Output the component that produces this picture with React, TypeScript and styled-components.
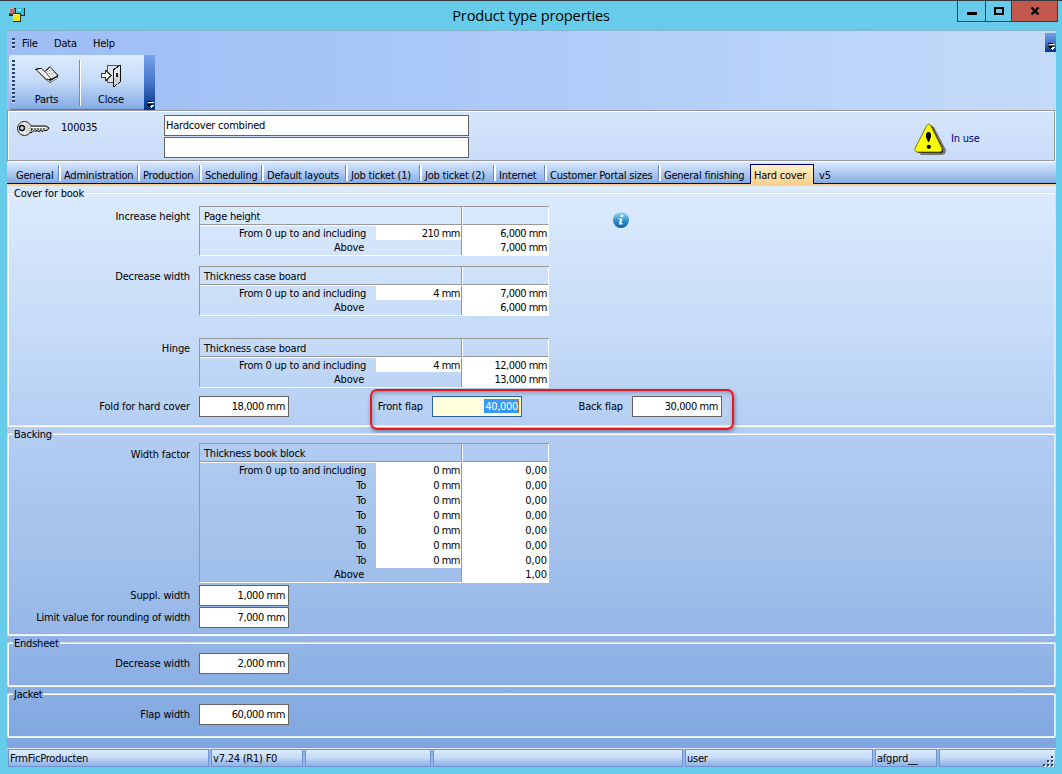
import React from 'react';
import styled, { createGlobalStyle } from 'styled-components';

const GlobalStyle = createGlobalStyle`
  * {
    box-sizing: border-box;
  }

  body {
    margin: 0;
    overflow: hidden;
    color: #000;
    font-family: 'DejaVu Sans Condensed', 'DejaVu Sans', sans-serif;
    font-stretch: condensed;
    font-size: 11px;
    line-height: 14px;
    letter-spacing: -0.22px;
    white-space: nowrap;
  }
`;

const Window = styled.div`
  width: 1062px;
  height: 774px;
  padding: 0 6px 6px 7px;
  display: flex;
  flex-direction: column;
  background: #67cbea;
  border-top: 1px solid #33393d;
`;

const TitleBar = styled.header`
  height: 29px;
  display: flex;
  justify-content: space-between;
  align-items: flex-start;
  margin: 0 -2px 0 1px;
`;

const TitleIcon = styled.svg`
  width: 97px;
  height: 18px;
  margin-top: 5px;
`;

const Title = styled.h1`
  margin: 4px 0 0;
  font-family: 'Open Sans', 'Noto Sans', sans-serif;
  font-stretch: normal;
  font-size: 14.6px;
  font-weight: 400;
  line-height: 20px;
  letter-spacing: -0.18px;
`;

const WindowButtons = styled.div`
  display: flex;
  height: 21px;
  border: 1px solid #27414b;
  border-top: none;
`;

const WindowButton = styled.button<{ $width: number; $close?: boolean }>`
  width: ${(p) => p.$width}px;
  height: 20px;
  padding: 0;
  border: none;
  border-right: ${(p) => (p.$close ? 'none' : '1px solid #27414b')};
  background: ${(p) => (p.$close ? '#c2584e' : 'transparent')};

  svg {
    display: block;
    margin: 0 auto;
  }
`;

const Client = styled.main`
  flex: 1;
  display: flex;
  flex-direction: column;
  border-top: 1px solid #80b7cc;
  background: #9ebef5;
`;

const CommandArea = styled.div`
  height: 79px;
  display: flex;
  justify-content: space-between;
  background: linear-gradient(90deg, #9ebdf5 0%, #a9c7f7 40%, #bcd5fa 80%, #c4daf8 100%);
`;

const MenuBar = styled.nav`
  height: 24px;
  display: flex;
  align-items: center;
  padding: 1px 0 0 5px;
`;

const MenuItem = styled.span<{ $width: number; $indent?: number }>`
  width: ${(p) => p.$width}px;
  padding: 1px 0 0 ${(p) => p.$indent || 0}px;
`;

const Grip = styled.i<{ $height: number }>`
  width: 3px;
  height: ${(p) => p.$height}px;
  background: repeating-linear-gradient(180deg, #27417c 0 2px, #d8e6fb 2px 3px, transparent 3px 4px);
`;

const ToolBar = styled.div`
  width: 146px;
  height: 55px;
  margin-left: 2px;
  display: flex;
  border-radius: 3px 0 0 3px;
  background: linear-gradient(180deg, #dcebfd 0%, #c7dcf8 45%, #85ade7 97%, #3c65ae 100%);
  padding: 5px 0 0 3px;
`;

const ToolButton = styled.div<{ $width: number; $divider?: boolean }>`
  width: ${(p) => p.$width}px;
  height: 46px;
  display: flex;
  flex-direction: column;
  align-items: center;
  padding: 4px 1px 0 0;
  border-right: ${(p) => (p.$divider ? '1px solid #6a8ccb' : 'none')};
  box-shadow: ${(p) => (p.$divider ? '1px 0 0 #fff' : 'none')};

  svg {
    flex: none;
    margin-bottom: 5px;
  }
`;

const Overflow = styled.div<{ $height: number }>`
  width: 11px;
  height: ${(p) => p.$height}px;
  margin-top: ${(p) => (p.$height > 30 ? -5 : 2)}px;
  margin-left: auto;
  display: flex;
  align-items: flex-end;
  padding: 0 0 2px 3px;
  background: linear-gradient(180deg, #76a2ec 0%, #4476c8 50%, #003489 100%);
`;

const RecordHeader = styled.section`
  height: 51px;
  width: 1048px;
  display: flex;
  align-items: flex-start;
  border: 1px solid #989898;
  box-shadow: inset 1px 1px 0 #fff, 1px 1px 0 #fff;
  background: linear-gradient(180deg, #d5e5fb, #c9dcf8);
  padding-left: 9px;

  > svg {
    margin-top: 9px;
  }
`;

const RecordId = styled.span`
  width: 103px;
  margin: 10px 0 0 11px;
`;

const RecordFields = styled.div`
  display: flex;
  flex-direction: column;
  gap: 1px;
  margin-top: 4px;
  width: 750px;
`;

const NameField = styled.div`
  width: 305px;
  height: 21px;
  padding: 3px 1px;
  border: 1px solid #646464;
  background: #fff;
`;

const InUse = styled.div`
  display: flex;
  margin-top: 12px;
  color: #00007f;

  span {
    margin: 9px 0 0 4px;
  }
`;

const TabStrip = styled.nav`
  height: 24px;
  padding-top: 2px;
  margin-top: 1px;
  display: flex;
  border-bottom: 2px solid #fdcf8c;
  background: linear-gradient(180deg, #dbe9fd 0%, #a9c6f1 55%, #82a9e2 100%);
`;

const Tab = styled.div<{ $width?: number; $active?: boolean; $last?: boolean; $first?: boolean }>`
  position: relative;
  width: ${(p) => p.$width}px;
  flex: ${(p) => (p.$width ? 'none' : 1)};
  height: 20px;
  padding: 5px 0 0 ${(p) => (p.$first ? 9 : p.$width ? 3 : 5)}px;
  border-bottom: 1px solid #000078;

  &::after {
    content: '';
    display: ${(p) => (p.$last || p.$active ? 'none' : 'block')};
    position: absolute;
    top: 1px;
    right: 0;
    width: 2px;
    height: 16px;
    border-left: 1px solid #6688c8;
    background: #fff;
  }

  ${(p) =>
    p.$active &&
    `
    border: 1px solid #000078;
    border-bottom: none;
    background: linear-gradient(180deg, #fff1cc, #fdcf8c);
    padding-top: 4px;
  `}
`;

const Page = styled.section`
  flex: 1;
  padding-top: 6px;
  display: flex;
  flex-direction: column;
  gap: 6px;
  background: linear-gradient(180deg, #ddecfe 0%, #d0e2fa 14%, #c4daf7 28%, #b3cdf2 44%, #9fbeea 70%, #7fa6e0 100%);
`;

const Group = styled.fieldset<{ $height: number }>`
  position: relative;
  height: ${(p) => p.$height}px;
  margin: 0;
  padding: 0;
  border: 1px solid #d5e1ed;
  border-bottom-color: #fff;
  box-shadow: inset 1px 1px 0 #fff, inset -1px -1px 0 #e4edf6;
  border-radius: 2px;
  min-width: 0;
`;

const GroupBody = styled.div<{ $top: number }>`
  padding-top: ${(p) => p.$top}px;
`;

const GroupTitle = styled.span<{ $color: string }>`
  position: absolute;
  top: -6px;
  left: 5px;
  height: 14px;
  padding: 0 1px;
  background: ${(p) => p.$color};
`;

const Row = styled.div<{ $after?: number }>`
  display: flex;
  align-items: flex-start;
  margin-bottom: ${(p) => p.$after || 0}px;
`;

const Label = styled.label<{ $width?: number; $tall?: boolean; $tight?: boolean }>`
  width: ${(p) => p.$width || 182}px;
  margin-right: 9px;
  padding-top: ${(p) => (p.$tall ? 5 : 4)}px;
  text-align: right;
  letter-spacing: ${(p) => (p.$tight ? -0.24 : -0.14)}px;
`;

const Amount = styled.div<{ $focused?: boolean }>`
  width: 90px;
  height: 21px;
  padding: 3px 3px 0 0;
  border: 1px solid ${(p) => (p.$focused ? '#2b6299' : '#646464')};
  background: ${(p) => (p.$focused ? '#ffffdb' : '#fff')};
  text-align: right;
  letter-spacing: ${(p) => (p.$focused ? -0.3 : -0.42)}px;

  mark {
    display: block;
    width: 35px;
    height: 14px;
    margin: -1px -1px 0 auto;
    padding-top: 1px;
    line-height: 13px;
    background: #3399ff;
    color: #fff;
    border-right: 1px solid #cc6600;
  }
`;

const Table = styled.div`
  width: 350px;
  border-left: 1px solid #989898;
  border-top: 1px solid #989898;
  border-bottom: 1px solid #fff;
  display: grid;
  grid-template-columns: 262px 87px;
`;

const HeadCell = styled.div<{ $value?: boolean }>`
  height: 18px;
  margin-bottom: 1px;
  padding: 3px 0 0 4px;
  border-bottom: 1px solid #989898;
  border-right: 1px solid ${(p) => (p.$value ? '#fff' : '#989898')};
  border-left: ${(p) => (p.$value ? '1px solid #fff' : 'none')};
  box-shadow: 0 1px 0 #fff;
`;

const RangeCell = styled.div<{ $height: number }>`
  display: grid;
  grid-template-columns: 176px 85px;
  height: ${(p) => p.$height}px;
  border-right: 1px solid #989898;
  text-align: right;
`;

const RangeLabel = styled.span<{ $above?: boolean; $top: number }>`
  padding: ${(p) => p.$top}px ${(p) => (p.$above ? 12 : 10)}px 0 0;
`;

const TableValue = styled.span<{ $blank?: boolean; $height: number; $top: number; $end: number; $spacing: number }>`
  height: ${(p) => p.$height}px;
  padding: ${(p) => p.$top}px ${(p) => p.$end}px 0 0;
  background: ${(p) => (p.$blank ? 'transparent' : '#fff')};
  text-align: right;
  letter-spacing: ${(p) => p.$spacing}px;
`;

const InfoHolder = styled.div`
  margin: 6px 0 0 64px;
  height: 16px;
`;

const Highlight = styled.div`
  position: absolute;
  left: 362px;
  top: 196px;
  width: 364px;
  height: 41px;
  border: 2px solid #ee1518;
  border-radius: 7px;
  box-shadow: 1px 2px 4px rgba(40, 50, 80, 0.5), inset 1px 2px 4px rgba(40, 50, 80, 0.35);
`;

const StatusBar = styled.footer`
  height: 20px;
  display: flex;
  gap: 2px;
  padding: 0 1px 1px;
  border-top: 1px solid #dfe9f8;
  background: #94b5e8;
`;

const StatusCell = styled.div<{ $width: number }>`
  width: ${(p) => p.$width}px;
  height: 18px;
  padding: 2px 1px 0;
  border: 1px solid #6e93ce;
  background: linear-gradient(180deg, #dceafc 0%, #c6dbf7 50%, #a3c1ed 75%, #8fb2e6 100%);
`;

const ResizeCell = styled(StatusCell)`
  display: flex;
  justify-content: flex-end;
  border-right: none;
  padding-top: 5px;
`;

type TableRow = { label: string; limit?: string; value: string };

const tabs: { label: string; width?: number }[] = [
  { label: 'General', width: 54 },
  { label: 'Administration', width: 79 },
  { label: 'Production', width: 62 },
  { label: 'Scheduling', width: 62 },
  { label: 'Default layouts', width: 84 },
  { label: 'Job ticket (1)', width: 74 },
  { label: 'Job ticket (2)', width: 74 },
  { label: 'Internet', width: 51 },
  { label: 'Customer Portal sizes', width: 114 },
  { label: 'General finishing', width: 89 },
  { label: 'Hard cover', width: 64 },
  { label: 'v5' },
];

const backingRows: TableRow[] = [
  { label: 'From 0 up to and including', limit: '0 mm', value: '0,00' },
  ...Array.from({ length: 6 }, () => ({ label: 'To', limit: '0 mm', value: '0,00' })),
  { label: 'Above', value: '1,00' },
];

const caseRows = (limit: string, first: string, above: string): TableRow[] => [
  { label: 'From 0 up to and including', limit, value: first },
  { label: 'Above', value: above },
];

function RangeTable({ title, rows }: { title: string; rows: TableRow[] }) {
  const short = rows.length === 2;

  return (
    <Table>
      <HeadCell>{title}</HeadCell>
      <HeadCell $value />
      {rows.map((row, i) => {
        const above = !row.limit;
        const top = above && !short ? 0 : 1;
        // short tables give the spare pixel to the last row
        const height = above === short ? 15 : 14;
        return (
          <React.Fragment key={i}>
            <RangeCell $height={height}>
              <RangeLabel $above={above} $top={top}>
                {row.label}
              </RangeLabel>
              <TableValue $blank={above} $height={height} $top={top} $end={1} $spacing={-0.5}>
                {row.limit}
              </TableValue>
            </RangeCell>
            <TableValue $height={height} $top={top} $end={2} $spacing={short ? -0.5 : -0.1}>
              {row.value}
            </TableValue>
          </React.Fragment>
        );
      })}
    </Table>
  );
}

function AppIcon() {
  return (
    <TitleIcon viewBox="0 0 97 18" shapeRendering="crispEdges">
      <path d="M1 2h7v8H1z" fill="#33282a" />
      <path d="M2 3h5v5H2z" fill="#b56f70" />
      <path d="M1 2h5v1H2v4H1z" fill="#dba9a6" />
      <path d="M9 2h8v8H9z" fill="#16272e" />
      <path d="M9 2h7v7h-7z" fill="#1fc4f0" />
      <path d="M10 3h3v2h-3z" fill="#a8efff" />
      <path d="M5 7h8v9H5z" fill="#2f2d08" />
      <path d="M5 8h7v7H5z" fill="#f5e700" />
      <path d="M6 8h4v1H6z" fill="#fffb9c" />
    </TitleIcon>
  );
}

function BookIcon() {
  return (
    <svg width="24" height="24" viewBox="0 0 24 24">
      <path d="M0 5l11 11 4 3 8-5v-3L14 3 10 7 6 4z" fill="#222" />
      <path d="M1.500 5.500L7 5l5 3 4 7-4 .5z" fill="#fff" />
      <path d="M10.500 7.500L15 3.500l7.500 8L16 15z" fill="#f2f2ee" />
      <path d="M12.500 16.500l3 1 7-4" fill="none" stroke="#fff" />
      <path
        d="M0 5.500h3M2 4.500h5M7 5.500l3 2 5-5 8 9-7 4-4-.5M10 7.500l6 7.500"
        fill="none"
        stroke="#000"
        strokeWidth=".9"
        strokeDasharray="2 .6"
      />
      <path d="M12.500 7.500l5.500 6M14 6l6 6.500M15.500 5l5 5.500" stroke="#888" strokeDasharray="1 1" />
      <path d="M5 6.500l7 7" stroke="#ccc" strokeDasharray="1 1" />
    </svg>
  );
}

function DoorIcon() {
  return (
    <svg width="22" height="24" viewBox="0 0 22 24" shapeRendering="crispEdges">
      <path d="M7 1h14v1H8v17H7z" fill="#555" />
      <path d="M8 2h12L13 6v13H8z" fill="#dbe4ee" />
      <path d="M8 18h6v1H8z" fill="#555" />
      <path d="M20 1h1v17l-7 5h-1V5z" fill="#111" />
      <path d="M14 6l6-4v16l-6 4z" fill="#ececec" />
      <path d="M14 14l6-4v8l-6 4z" fill="#d2d2d0" />
      <path d="M16 9h2v4h-2z" fill="#222" />
      <path d="M1 9h4V6h1l6 5-6 6H5v-3H1z" fill="#333" />
      <path d="M2 10h4V8l4 3.500L6 15v-2H2z" fill="#fbfbef" />
    </svg>
  );
}

function KeyIcon() {
  return (
    <svg width="33" height="17" viewBox="0 0 33 17">
      <path d="M13 6h16l3 2-2 2.500h-3l-1 1-2-1-2 1-2-1-2 1-1-1-2 2h-3z" fill="#ccccc6" stroke="#000" />
      <ellipse cx="7.500" cy="8.500" rx="7" ry="7" fill="#eeeee8" stroke="#222" />
      <path d="M9 3l5 3v5l-5 4z" fill="#bdbdb7" opacity=".8" />
      <path d="M10 4v9M12 5v8" stroke="#fff" strokeDasharray="1 1" />
      <circle cx="5" cy="8" r="2.500" fill="#c9dcf5" stroke="#111" strokeWidth="1.400" />
      <path d="M14 7.500h15" stroke="#fff" />
      <path d="M14 9h15" stroke="#333" strokeDasharray="2 1" />
    </svg>
  );
}

function WarningIcon() {
  return (
    <svg width="33" height="33" viewBox="0 0 33 33">
      <path d="M17 3l3 1 12 23-1 4-3 1H6z" fill="#777" />
      <path d="M16 2l2 1 11 23v3l-2 1H4z" fill="#000" />
      <path d="M14.500 1h1L17 3l11 22.500v2L26.500 29h-24L1 27.500v-2L12.500 3z" fill="#ff0" stroke="#77770b" />
      <path d="M12 11q.500-2 2.500-2t2.500 2v3l-2 5h-1l-2-5z" fill="#000" />
      <circle cx="14.800" cy="23.800" r="2.100" />
    </svg>
  );
}

function InfoIcon() {
  return (
    <svg width="16" height="16" viewBox="0 0 16 16">
      <defs>
        <linearGradient id="info" x2="0" y2="1">
          <stop stopColor="#a5dcf3" />
          <stop offset=".45" stopColor="#3e9ed6" />
          <stop offset="1" stopColor="#0b5aa5" />
        </linearGradient>
      </defs>
      <circle cx="8" cy="8" r="8" fill="url(#info)" />
      <path d="M8 3h2.500L10 5H7.500zM6 6.500h3.500L8.300 11h1.200v1.500H5.800L7 8H5.800z" fill="#fff" />
    </svg>
  );
}

function OverflowIcon() {
  return (
    <svg width="7" height="7" viewBox="0 0 7 7" shapeRendering="crispEdges">
      <path d="M1 1h6v1H1zM2 4h5L4.500 7z" fill="#fff" />
      <path d="M0 0h5v1H0zM0 3h5L2.500 6z" fill="#000" />
    </svg>
  );
}

function SizeGrip() {
  return (
    <svg width="12" height="12" viewBox="0 0 12 12" shapeRendering="crispEdges">
      <path d="M10 2h2v2h-2zM6 6h2v2H6zM10 6h2v2h-2zM2 10h2v2H2zM6 10h2v2H6zM10 10h2v2h-2z" fill="#fff" />
      <path d="M9 1h2v2H9zM5 5h2v2H5zM9 5h2v2H9zM1 9h2v2H1zM5 9h2v2H5zM9 9h2v2H9z" fill="#27417c" />
    </svg>
  );
}

function App() {
  return (
    <>
      <GlobalStyle />
      <Window>
        <TitleBar>
          <AppIcon />
          <Title>Product type properties</Title>
          <WindowButtons>
            <WindowButton $width={28} aria-label="Minimize">
              <svg width="10" height="10" viewBox="0 0 10 10">
                <path d="M0 6h10v3H0z" />
              </svg>
            </WindowButton>
            <WindowButton $width={26} aria-label="Maximize">
              <svg width="11" height="10" viewBox="0 0 11 10">
                <path d="M2 2h8v6H2z" fill="none" stroke="#000" strokeWidth="2" />
              </svg>
            </WindowButton>
            <WindowButton $width={45} $close aria-label="Close">
              <svg width="10" height="10" viewBox="0 0 10 10">
                <path d="M1.500 1.500l7 7M8.500 1.500l-7 7" stroke="#000" strokeWidth="2.400" />
              </svg>
            </WindowButton>
          </WindowButtons>
        </TitleBar>
        <Client>
          <CommandArea>
            <div>
              <MenuBar>
                <Grip $height={11} />
                <MenuItem $width={39} $indent={7}>
                  File
                </MenuItem>
                <MenuItem $width={39}>Data</MenuItem>
                <MenuItem $width={30}>Help</MenuItem>
              </MenuBar>
              <ToolBar>
                <Grip $height={43} />
                <ToolButton $width={65} $divider>
                  <BookIcon />
                  Parts
                </ToolButton>
                <ToolButton $width={63}>
                  <DoorIcon />
                  Close
                </ToolButton>
                <Overflow $height={55}>
                  <OverflowIcon />
                </Overflow>
              </ToolBar>
            </div>
            <Overflow $height={19}>
              <OverflowIcon />
            </Overflow>
          </CommandArea>
          <RecordHeader>
            <KeyIcon />
            <RecordId>100035</RecordId>
            <RecordFields>
              <NameField>Hardcover combined</NameField>
              <NameField />
            </RecordFields>
            <InUse>
              <WarningIcon />
              <span>In use</span>
            </InUse>
          </RecordHeader>
          <TabStrip>
            {tabs.map((tab, i) => (
              <Tab
                key={tab.label}
                $width={tab.width}
                $first={i === 0}
                $active={tab.label === 'Hard cover'}
                $last={!tab.width || tab.label === 'General finishing'}
              >
                {tab.label}
              </Tab>
            ))}
          </TabStrip>
          <Page>
            <Group $height={235}>
              <GroupTitle $color="#dbeafd">Cover for book</GroupTitle>
              <GroupBody $top={13}>
                <Row $after={10}>
                  <Label>Increase height</Label>
                  <RangeTable title="Page height" rows={caseRows('210 mm', '6,000 mm', '7,000 mm')} />
                  <InfoHolder>
                    <InfoIcon />
                  </InfoHolder>
                </Row>
                <Row $after={22}>
                  <Label>Decrease width</Label>
                  <RangeTable title="Thickness case board" rows={caseRows('4 mm', '7,000 mm', '6,000 mm')} />
                </Row>
                <Row $after={8}>
                  <Label>Hinge</Label>
                  <RangeTable title="Thickness case board" rows={caseRows('4 mm', '12,000 mm', '13,000 mm')} />
                </Row>
                <Row>
                  <Label>Fold for hard cover</Label>
                  <Amount>18,000 mm</Amount>
                  <Label $width={134}>Front flap</Label>
                  <Amount $focused>
                    <mark>40,000</mark>
                  </Amount>
                  <Label $width={101}>Back flap</Label>
                  <Amount>30,000 mm</Amount>
                </Row>
              </GroupBody>
              <Highlight />
            </Group>
            <Group $height={203}>
              <GroupTitle $color="#b4cef2">Backing</GroupTitle>
              <GroupBody $top={9}>
                <Row $after={2}>
                  <Label $tall>Width factor</Label>
                  <RangeTable title="Thickness book block" rows={backingRows} />
                </Row>
                <Row $after={1}>
                  <Label>Suppl. width</Label>
                  <Amount>1,000 mm</Amount>
                </Row>
                <Row>
                  <Label $tight>Limit value for rounding of width</Label>
                  <Amount>7,000 mm</Amount>
                </Row>
              </GroupBody>
            </Group>
            <Group $height={45}>
              <GroupTitle $color="#92b3e7">Endsheet</GroupTitle>
              <GroupBody $top={10}>
                <Row>
                  <Label>Decrease width</Label>
                  <Amount>2,000 mm</Amount>
                </Row>
              </GroupBody>
            </Group>
            <Group $height={45}>
              <GroupTitle $color="#8aaee5">Jacket</GroupTitle>
              <GroupBody $top={10}>
                <Row>
                  <Label>Flap width</Label>
                  <Amount>60,000 mm</Amount>
                </Row>
              </GroupBody>
            </Group>
          </Page>
          <StatusBar>
            <StatusCell $width={201}>FrmFicProducten</StatusCell>
            <StatusCell $width={92}>v7.24 (R1) F0</StatusCell>
            <StatusCell $width={126} />
            <StatusCell $width={250} />
            <StatusCell $width={188}>user</StatusCell>
            <StatusCell $width={62}>afgprd__</StatusCell>
            <ResizeCell $width={116}>
              <SizeGrip />
            </ResizeCell>
          </StatusBar>
        </Client>
      </Window>
    </>
  );
}

export default App;
